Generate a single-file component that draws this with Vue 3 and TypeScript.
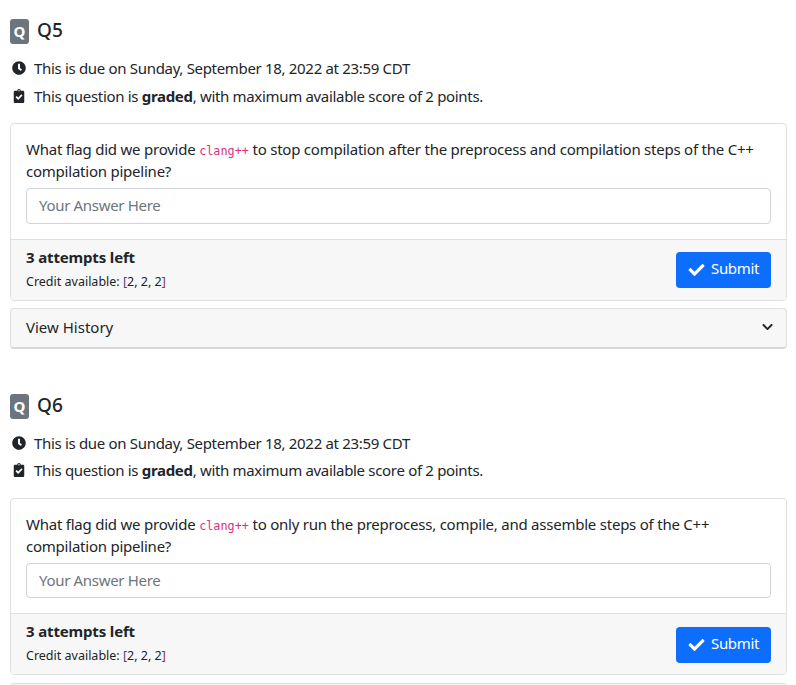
<script setup lang="ts">
interface Question {
  id: string
  before: string
  after: string
}

const questions: Question[] = [
  {
    id: 'Q5',
    before: 'What flag did we provide',
    after: 'to stop compilation after the preprocess and compilation steps of the C++ compilation pipeline?',
  },
  {
    id: 'Q6',
    before: 'What flag did we provide',
    after: 'to only run the preprocess, compile, and assemble steps of the C++ compilation pipeline?',
  },
]
</script>

<template>
  <main class="page">
    <section v-for="q in questions" :key="q.id" class="question">
      <h2 class="title"><span class="badge">Q</span><span class="title-text">{{ q.id }}</span></h2>
      <p class="meta">
        <svg class="meta-icon" viewBox="0 0 512 512" aria-hidden="true">
          <path d="M256 8C119 8 8 119 8 256s111 248 248 248 248-111 248-248S393 8 256 8zm57 350-88-64c-3-2-5-6-5-10V116c0-7 5-12 12-12h48c7 0 12 5 12 12v138l63 46c5 4 7 12 3 17l-28 39c-4 5-12 6-17 2z" />
        </svg>
        <span>This is due on Sunday, September 18, 2022 at 23:59 CDT</span>
      </p>
      <p class="meta">
        <svg class="meta-icon" viewBox="0 0 384 512" aria-hidden="true">
          <path d="M336 64h-80c0-35-29-64-64-64s-64 29-64 64H48C21 64 0 85 0 112v352c0 27 21 48 48 48h288c27 0 48-21 48-48V112c0-27-21-48-48-48zM192 40c13 0 24 11 24 24s-11 24-24 24-24-11-24-24 11-24 24-24zm121 209L170 391c-5 5-12 5-17 0l-82-83c-5-5-5-12 0-17l28-28c5-5 12-5 17 0l46 46 107-106c5-5 12-5 17 0l27 29c5 5 5 12 0 17z" />
        </svg>
        <span>This question is <strong>graded</strong>, with maximum available score of 2 points.</span>
      </p>

      <div class="card">
        <div class="card-body">
          <p class="prompt">{{ q.before }} <code>clang++</code> {{ q.after }}</p>
          <input class="answer" type="text" placeholder="Your Answer Here" />
        </div>
        <div class="card-footer">
          <div class="status">
            <div class="attempts">3 attempts left</div>
            <div class="credit">Credit available: <span class="bracket-a">[</span>2, 2, 2<span class="bracket-b">]</span></div>
          </div>
          <button class="submit" type="button">
            <svg class="check" viewBox="0 0 512 512" aria-hidden="true">
              <path d="M174 439 7 273c-10-10-10-26 0-36l36-36c10-10 26-10 36 0l113 112 241-241c10-10 26-10 36 0l36 36c10 10 10 26 0 36L210 439c-10 10-26 10-36 0z" />
            </svg>
            <span class="submit-label">Submit</span>
          </button>
        </div>
      </div>

      <div class="history">
        <span>View History</span>
        <svg class="chevron" viewBox="0 0 448 512" aria-hidden="true">
          <path d="M207 381 13 187c-9-9-9-24 0-34l23-22c9-10 24-10 34 0l154 153 154-153c10-10 25-10 34 0l23 22c9 10 9 25 0 34L241 381c-9 9-25 9-34 0z" />
        </svg>
      </div>
    </section>
  </main>
</template>

<style scoped>
.page {
  box-sizing: border-box;
  width: 796px;
  height: 685px;
  overflow: hidden;
  padding: 19px 9px 0 10px;
  font-family: "Noto Sans", "Open Sans", sans-serif;
  font-size: 15px;
  line-height: 24px;
  letter-spacing: -0.32px;
  color: #212529;
}

.question {
  height: 374.6px;
}

.title {
  display: flex;
  align-items: center;
  gap: 8px;
  height: 25px;
  margin: 0 0 12px;
  font-size: 19px;
  font-weight: 500;
  line-height: 25px;
  letter-spacing: 0;
}

.title-text {
  padding-bottom: 2px;
}

.badge {
  display: flex;
  align-items: center;
  justify-content: center;
  width: 19px;
  height: 25px;
  border-radius: 3px;
  background: #6c757d;
  color: #fff;
  font-size: 15px;
  font-weight: 700;
}

.meta {
  display: flex;
  align-items: center;
  gap: 8px;
  height: 24px;
  margin: 0 0 3.8px;
  padding-left: 2px;
}

.meta-icon {
  flex: none;
  width: 14px;
  height: 14px;
  fill: #212529;
}

.card {
  margin-top: 15.4px;
  border: 1px solid #dfdfdf;
  border-radius: 4px;
}

.card-body {
  padding: 14px 15px 15px;
}

.prompt {
  margin: 0 0 6px;
  line-height: 22px;
  letter-spacing: -0.23px;
}

code {
  font-family: "DejaVu Sans Mono", "Liberation Mono", monospace;
  font-size: 11.8px;
  line-height: 1;
  letter-spacing: 0;
  color: #d63384;
}

.answer {
  display: block;
  box-sizing: border-box;
  width: 100%;
  height: 35.6px;
  padding: 4px 12px 6px;
  border: 1px solid #ced4da;
  border-radius: 4px;
  background: #fff;
  font: inherit;
  letter-spacing: inherit;
  color: #212529;
}

.answer::placeholder {
  color: #6c757d;
  opacity: 1;
}

.card-footer {
  display: flex;
  align-items: center;
  justify-content: space-between;
  box-sizing: border-box;
  height: 61px;
  padding: 1px 15px 0;
  border-top: 1px solid #dfdfdf;
  border-radius: 0 0 3px 3px;
  background: #f7f7f7;
}

.status {
  padding-bottom: 3px;
}

.attempts {
  font-weight: 700;
  line-height: 24px;
  letter-spacing: -0.15px;
}

.credit {
  margin-top: 2px;
  font-size: 12.5px;
  line-height: 22px;
  letter-spacing: 0;
}

.bracket-a {
  color: #5a3a80;
}

.bracket-b {
  color: #8a3040;
}

.submit {
  display: flex;
  align-items: center;
  gap: 6px;
  box-sizing: border-box;
  width: 95px;
  height: 36px;
  padding: 0 12px;
  border: 0;
  border-radius: 4px;
  background: #0d6efd;
  color: #fff;
  font: inherit;
  letter-spacing: inherit;
  white-space: nowrap;
}

.submit-label {
  padding-bottom: 4px;
}

.check {
  flex: none;
  width: 17px;
  height: 16px;
  fill: #fff;
}

.history {
  display: flex;
  align-items: center;
  justify-content: space-between;
  box-sizing: border-box;
  height: 40.6px;
  margin-top: 7.4px;
  padding: 0 13px 2px 15px;
  border: 1px solid #dfdfdf;
  border-bottom: 2px solid #d8d8d8;
  border-radius: 4px;
  background: #f7f7f7;
  letter-spacing: 0;
}

.chevron {
  width: 11px;
  height: 12px;
  fill: #212529;
}
</style>
